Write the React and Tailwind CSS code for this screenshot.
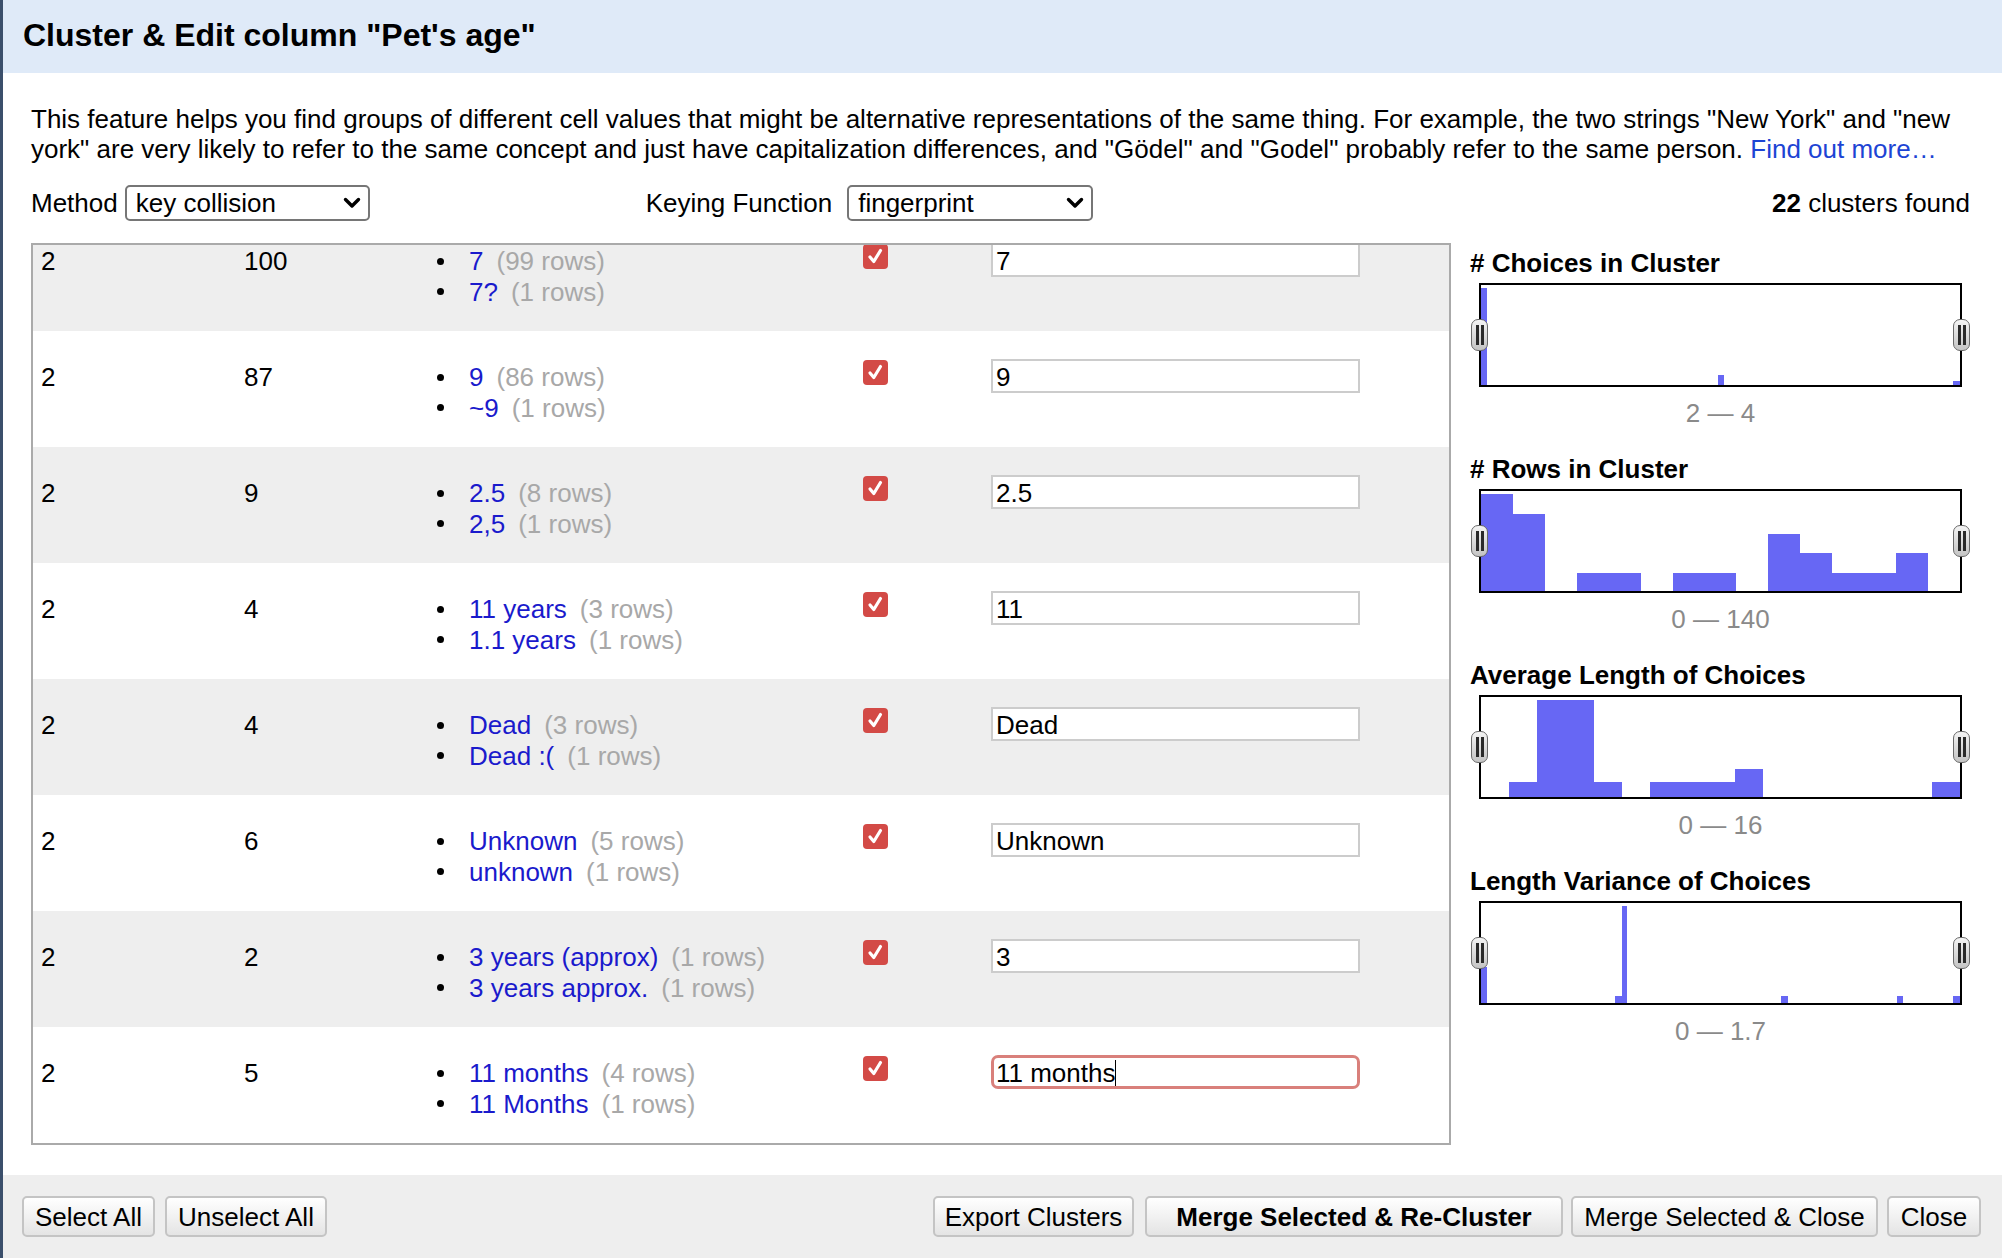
import React from 'react';

const rows = [
  { count: '100', choices: [['7', 99], ['7?', 1]], value: '7' },
  { count: '87', choices: [['9', 86], ['~9', 1]], value: '9' },
  { count: '9', choices: [['2.5', 8], ['2,5', 1]], value: '2.5' },
  { count: '4', choices: [['11 years', 3], ['1.1 years', 1]], value: '11' },
  { count: '4', choices: [['Dead', 3], ['Dead :(', 1]], value: 'Dead' },
  { count: '6', choices: [['Unknown', 5], ['unknown', 1]], value: 'Unknown' },
  { count: '2', choices: [['3 years (approx)', 1], ['3 years approx.', 1]], value: '3' },
  { count: '5', choices: [['11 months', 4], ['11 Months', 1]], value: '11 months', focused: true },
];

// bars as [x0, x1, height] in percent of the plot area; neighbouring bins of equal height are merged
const bins = (n, heights) => {
  const out = [];
  Object.entries(heights).forEach(([i, h]) => {
    const x0 = (Number(i) * 100) / n;
    const x1 = ((Number(i) + 1) * 100) / n;
    const last = out[out.length - 1];
    if (last && Math.abs(last[1] - x0) < 0.01 && last[2] === h) last[1] = x1;
    else out.push([x0, x1, h]);
  });
  return out;
};

const charts = [
  {
    title: '# Choices in Cluster',
    range: '2 — 4',
    bars: [[0, 1.3, 97], [49.4, 50.7, 10.5], [98.6, 100, 4]],
  },
  {
    title: '# Rows in Cluster',
    range: '0 — 140',
    bars: bins(15, { 0: 97, 1: 77, 3: 18, 4: 18, 6: 18, 7: 18, 9: 57, 10: 38, 11: 18, 12: 18, 13: 38 }),
  },
  {
    title: 'Average Length of Choices',
    range: '0 — 16',
    bars: bins(17, { 1: 15, 2: 97, 3: 97, 4: 15, 6: 15, 7: 15, 8: 15, 9: 28, 16: 15 }),
  },
  {
    title: 'Length Variance of Choices',
    range: '0 — 1.7',
    bars: [[0, 1.2, 36], [28, 29.4, 7.5], [29.4, 30.4, 97], [62.7, 64, 7.5], [86.8, 88.1, 7.5], [98.6, 100, 7.5]],
  },
];

function Chevron() {
  return (
    <svg width="18" height="12" viewBox="0 0 18 12" className="shrink-0">
      <path d="M2.5 2.5 L9 9 L15.5 2.5" fill="none" stroke="#000" strokeWidth="3.4" strokeLinecap="round" strokeLinejoin="round" />
    </svg>
  );
}

function Select({ label, width }) {
  return (
    <div
      className={`flex h-[36px] ${width} items-center justify-between rounded-[5px] border-2 border-[#767676] bg-white pl-[9px] pr-[7px]`}
    >
      <span>{label}</span>
      <Chevron />
    </div>
  );
}

function Checkbox() {
  return (
    <div className="flex h-[25px] w-[25px] items-center justify-center rounded-[4px] bg-[#d34a46]">
      <svg width="19" height="19" viewBox="0 0 19 19">
        <path d="M4 10 L7.8 14.5 L14.5 3.5" fill="none" stroke="#fff" strokeWidth="3.2" strokeLinecap="round" strokeLinejoin="round" />
      </svg>
    </div>
  );
}

function Handle({ side }) {
  return (
    <div
      className={`absolute top-1/2 flex h-[32px] w-[17px] -translate-y-1/2 items-center justify-center gap-[2px] rounded-[7px] border-[1.5px] border-[#6a6a6a] bg-gradient-to-b from-[#f4f4f4] to-[#c4c4c4] ${
        side === 'left' ? 'left-[-10px]' : 'right-[-10px]'
      }`}
    >
      <span className="h-[20px] w-[3px] bg-[#2a2a2a]" />
      <span className="h-[20px] w-[3px] bg-[#2a2a2a]" />
    </div>
  );
}

function Histogram({ title, range, bars }) {
  return (
    <div className="mb-[26px]">
      <div className="text-[26px] font-bold leading-[30px] text-black">{title}</div>
      <div className="relative ml-[9px] mt-[5px] h-[104px] w-[483px] border-2 border-black bg-white">
        <svg className="h-full w-full" viewBox="0 0 100 100" preserveAspectRatio="none" shapeRendering="crispEdges">
          {bars.map(([x0, x1, h], i) => (
            <rect key={i} x={x0} y={100 - h} width={x1 - x0} height={h} fill="#6767f4" />
          ))}
        </svg>
        <Handle side="left" />
        <Handle side="right" />
      </div>
      <div className="ml-[9px] mt-[11px] w-[483px] text-center leading-[30px] text-[#8a8a8a]">{range}</div>
    </div>
  );
}

function ClusterRow({ row, index }) {
  return (
    <div className={`flex h-[116px] shrink-0 pt-[29px] ${index % 2 === 0 ? 'bg-[#eeeeee]' : 'bg-white'}`}>
      <div className="mt-[2px] w-[211px] pl-[8px] leading-[30px]">2</div>
      <div className="mt-[2px] w-[193px] leading-[30px]">{row.count}</div>
      <div className="mt-[2px] w-[426px]">
        {row.choices.map(([v, n]) => (
          <div key={v} className="flex h-[30.5px] items-center whitespace-nowrap leading-[30px]">
            <span className="h-[7px] w-[7px] rounded-full bg-black" />
            <span className="ml-[25px] text-[#1a1acc]">{v}</span>
            <span className="ml-[13px] text-[#a8a8a8]">({n} rows)</span>
          </div>
        ))}
      </div>
      <div className="w-[128px]">
        <Checkbox />
      </div>
      {row.focused ? (
        <div className="-mt-[1px] flex h-[34px] w-[369px] items-center rounded-[7px] border-[3px] border-[#d9807b] bg-white pl-[2px] pt-[2px] leading-none">
          <span>{row.value}</span>
          <span className="h-[26px] w-[1px] bg-black" />
        </div>
      ) : (
        <div className="-mt-[1px] flex h-[34px] w-[369px] items-center border-2 border-[#cccccc] bg-white pl-[3px] pt-[2px] leading-none">
          {row.value}
        </div>
      )}
    </div>
  );
}

function Button({ children, width, bold }) {
  return (
    <div
      className={`flex h-[41px] ${width} items-center justify-center rounded-[5px] border-2 border-[#c4c4c4] bg-gradient-to-b from-white to-[#e4e4e4] leading-none ${
        bold ? 'font-bold' : ''
      }`}
    >
      {children}
    </div>
  );
}

export default function App() {
  return (
    <div className="flex h-[1258px] w-[2002px] flex-col overflow-hidden border-l-[3px] border-[#3b4f6b] bg-white font-['Liberation_Sans',Arial,sans-serif] text-[26px] text-black">
      <div className="flex h-[73px] shrink-0 items-center bg-[#dfeaf8] pb-[3px] pl-[20px]">
        <h1 className="text-[32px] font-bold">Cluster &amp; Edit column "Pet's age"</h1>
      </div>

      <div className="flex flex-1 flex-col pl-[28px] pr-[32px] pt-[31px]">
        <p className="leading-[30px]">
          <span className="whitespace-nowrap">
            This feature helps you find groups of different cell values that might be alternative representations of the
            same thing. For example, the two strings "New York" and "new
          </span>
          <br />
          <span className="whitespace-nowrap">
            york" are very likely to refer to the same concept and just have capitalization differences, and "Gödel" and
            "Godel" probably refer to the same person. <span className="text-[#1d44d4]">Find out more…</span>
          </span>
        </p>

        <div className="mt-[21px] flex h-[36px] items-center">
          <span>Method</span>
          <div className="ml-[7px]">
            <Select label="key collision" width="w-[245px]" />
          </div>
          <span className="ml-[276px]">Keying Function</span>
          <div className="ml-[15px]">
            <Select label="fingerprint" width="w-[246px]" />
          </div>
          <span className="ml-auto">
            <b>22</b> clusters found
          </span>
        </div>

        <div className="mt-[22px] flex">
          <div className="h-[902px] w-[1420px] shrink-0 overflow-hidden border-2 border-[#aaaaaa]">
            <div className="-mt-[30px] flex flex-col">
              {rows.map((row, i) => (
                <ClusterRow key={i} row={row} index={i} />
              ))}
            </div>
          </div>
          <div className="ml-[19px] flex-1 pt-[5px]">
            {charts.map((c) => (
              <Histogram key={c.title} {...c} />
            ))}
          </div>
        </div>
      </div>

      <div className="flex h-[83px] shrink-0 items-start bg-[#eeeeee] pl-[19px] pr-[21px] pt-[21px]">
        <Button width="w-[133px]">Select All</Button>
        <div className="ml-[10px]">
          <Button width="w-[162px]">Unselect All</Button>
        </div>
        <div className="ml-auto flex gap-[11px]">
          <Button width="w-[201px]">Export Clusters</Button>
          <Button width="w-[418px]" bold>
            Merge Selected &amp; Re-Cluster
          </Button>
        </div>
        <div className="ml-[8px]">
          <Button width="w-[307px]">Merge Selected &amp; Close</Button>
        </div>
        <div className="ml-[9px]">
          <Button width="w-[94px]">Close</Button>
        </div>
      </div>
    </div>
  );
}
